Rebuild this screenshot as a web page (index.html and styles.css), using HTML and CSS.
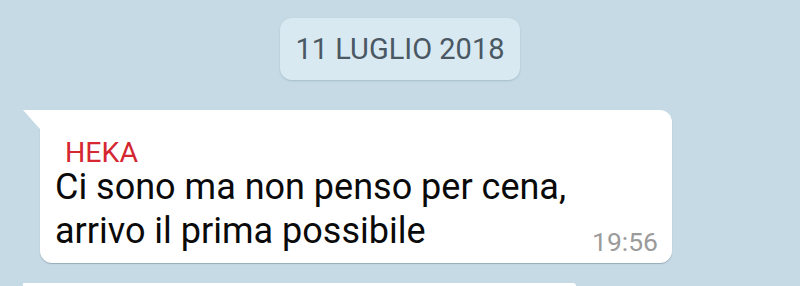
FILE: index.html
```html
<!DOCTYPE html>
<html lang="it">
<head>
    <meta charset="UTF-8">
    <title>Chat</title>
    <link rel="stylesheet" href="styles.css">
</head>
<body>
    <div class="chat">
        <div class="date-pill">11 LUGLIO 2018</div>

        <div class="bubble">
            <div class="sender">HEKA</div>
            <div class="bubble-body">
                <div class="text">Ci sono ma non penso per cena,<br>arrivo il prima possibile</div>
                <span class="time">19:56</span>
            </div>
        </div>

        <!-- next message, cut by the bottom edge -->
        <div class="bubble-peek"></div>
    </div>
</body>
</html>
```

FILE: styles.css
```css
/* chat colours */
:root {
    --chat-bg: #c5dae5;
    --pill-bg: #d8e9f2;
    --bubble-bg: #ffffff;
    --text-color: #0a0a0a;
    --name-color: #d42731;
    --time-color: #9b9b9b;
    --date-color: #4a5863;
}

* {
    margin: 0;
    padding: 0;
    box-sizing: border-box;
}

body {
    font-family: Roboto, 'Liberation Sans', Arial, sans-serif;
    background: var(--chat-bg);
    color: var(--text-color);
    width: 800px;
    height: 286px;
    overflow: hidden;
}

.chat {
    display: flex;
    flex-direction: column;
    padding-top: 18px;
}

/* date separator */
.date-pill {
    align-self: center;
    width: 240px;
    height: 62px;
    display: flex;
    align-items: center;
    justify-content: center;
    background: var(--pill-bg);
    border-radius: 12px;
    box-shadow: 0 1px 2px rgba(80, 110, 130, 0.25);
    color: var(--date-color);
    font-size: 29px;
}

/* message bubble */
.bubble {
    position: relative;
    margin: 30px 0 0 40px;
    width: 632px;
    padding: 31px 14px 6px 15px;
    background: var(--bubble-bg);
    border-radius: 0 12px 12px 12px;
    box-shadow: 0 1px 1px rgba(70, 90, 100, 0.35);
}

.bubble::before {
    content: "";
    position: absolute;
    left: -17px;
    top: 0;
    border-top: 19px solid var(--bubble-bg);
    border-left: 17px solid transparent;
}

.sender {
    color: var(--name-color);
    font-size: 28.5px;
    line-height: 24px;
    padding-left: 10px;
}

.bubble-body {
    display: flex;
    align-items: flex-end;
    justify-content: space-between;
}

.text {
    font-size: 36px;
    line-height: 44px;
    margin-bottom: 4px;
}

.time {
    color: var(--time-color);
    font-size: 26.5px;
    line-height: 30px;
}

.bubble-peek {
    margin: 20px 0 0 23px;
    width: 553px;
    height: 3px;
    background: var(--bubble-bg);
    border-top-right-radius: 3px;
}
```
